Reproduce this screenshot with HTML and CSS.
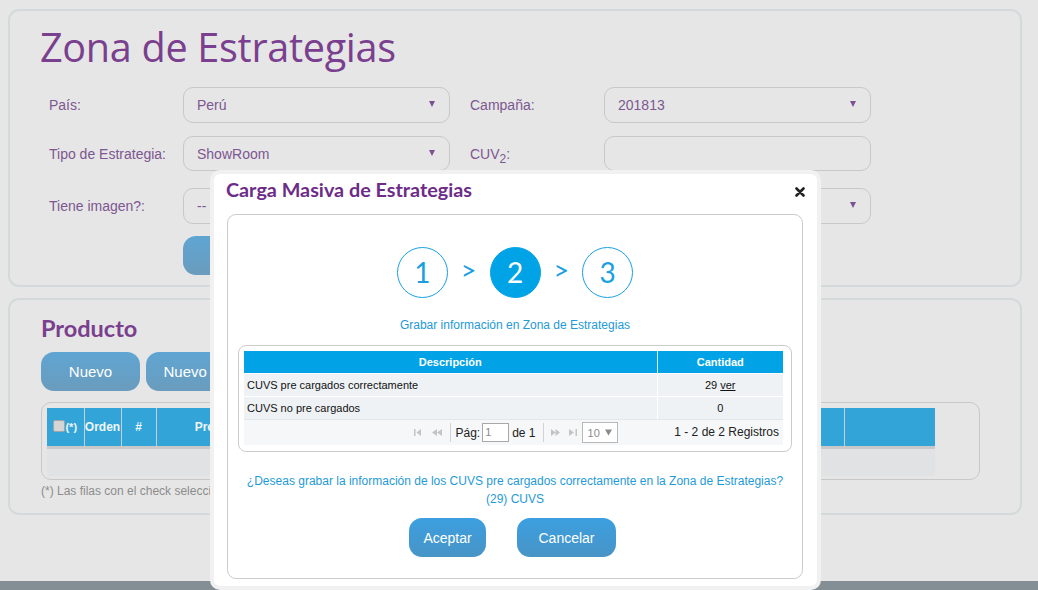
FILE: index.html
```html
<!DOCTYPE html>
<html lang="es">
<head>
<meta charset="utf-8">
<title>Zona de Estrategias</title>
<link rel="stylesheet" href="styles.css">
</head>
<body>
<div class="page">
  <section class="panel panel-filter">
    <h1 class="page-title">Zona de Estrategias</h1>
    <div class="form">
      <div class="form-row row-1">
        <label class="lbl">País:</label>
        <div class="select"><span>Perú</span><i class="arrow"></i></div>
        <label class="lbl lbl-2">Campaña:</label>
        <div class="select"><span>201813</span><i class="arrow"></i></div>
      </div>
      <div class="form-row row-2">
        <label class="lbl">Tipo de Estrategia:</label>
        <div class="select"><span>ShowRoom</span><i class="arrow"></i></div>
        <label class="lbl lbl-2">CUV<sub>2</sub>:</label>
        <div class="select input"></div>
      </div>
      <div class="form-row row-3">
        <label class="lbl">Tiene imagen?:</label>
        <div class="select"><span>--</span><i class="arrow"></i></div>
        <label class="lbl lbl-2">Activo:</label>
        <div class="select"><span>--</span><i class="arrow"></i></div>
      </div>
      <div class="form-actions">
        <button class="btn btn-muted btn-search">Buscar</button>
      </div>
    </div>
  </section>

  <section class="panel panel-product">
    <h2 class="section-title">Producto</h2>
    <div class="product-actions">
      <button class="btn btn-muted btn-nuevo">Nuevo</button>
      <button class="btn btn-muted btn-nuevo2">Nuevo Masivo</button>
    </div>
    <div class="grid-wrap">
      <table class="grid">
        <colgroup>
          <col style="width:37px"><col style="width:37px"><col style="width:35px"><col style="width:114px">
          <col style="width:190px"><col style="width:190px"><col style="width:194px"><col style="width:91px">
        </colgroup>
        <thead>
          <tr>
            <th><span class="chk"></span>(*)</th>
            <th>Orden</th>
            <th>#</th>
            <th>Precio</th>
            <th></th>
            <th></th>
            <th></th>
            <th></th>
          </tr>
        </thead>
        <tbody>
          <tr class="empty"><td colspan="8"></td></tr>
        </tbody>
      </table>
    </div>
    <p class="note">(*) Las filas con el check seleccionado indican que la estrategia se encuentra habilitada.</p>
  </section>
</div>
<div class="footer-strip"></div>

<div class="modal">
  <div class="modal-head">
    <h3 class="modal-title">Carga Masiva de Estrategias</h3>
    <span class="close" aria-label="Cerrar">
      <svg width="10" height="10" viewBox="0 0 10 10"><path d="M1.5 1.5 L8.5 8.5 M8.5 1.5 L1.5 8.5" stroke="#222" stroke-width="2.6" stroke-linecap="round"/></svg>
    </span>
  </div>
  <div class="modal-box">
    <div class="steps">
      <span class="step">1</span>
      <span class="step-sep">&gt;</span>
      <span class="step active">2</span>
      <span class="step-sep">&gt;</span>
      <span class="step">3</span>
    </div>
    <p class="step-caption">Grabar información en Zona de Estrategias</p>

    <div class="result-wrap">
      <table class="result">
        <colgroup><col style="width:413px"><col></colgroup>
        <thead>
          <tr><th>Descripción</th><th>Cantidad</th></tr>
        </thead>
        <tbody>
          <tr><td>CUVS pre cargados correctamente</td><td class="num">29 <a class="ver">ver</a></td></tr>
          <tr><td>CUVS no pre cargados</td><td class="num">0</td></tr>
        </tbody>
      </table>
      <div class="pager">
        <div class="pager-ctrl">
          <svg class="pi" width="7" height="7" viewBox="0 0 7 7"><rect x="0" y="0" width="1.5" height="7" fill="#c4c4c4"/><path d="M7 0 L2.5 3.5 L7 7 Z" fill="#c4c4c4"/></svg>
          <svg class="pi pi-2" width="10" height="7" viewBox="0 0 10 7"><path d="M5 0 L0 3.5 L5 7 Z M10 0 L5 3.5 L10 7 Z" fill="#c4c4c4"/></svg>
          <span class="psep psep-1"></span>
          <span class="ptxt">Pág:</span>
          <span class="pinput">1</span>
          <span class="ptxt">de 1</span>
          <span class="psep psep-2"></span>
          <svg class="pi" width="9" height="7" viewBox="0 0 9 7"><path d="M0 0 L4.5 3.5 L0 7 Z M4.5 0 L9 3.5 L4.5 7 Z" fill="#c4c4c4"/></svg>
          <svg class="pi pi-4" width="8" height="7" viewBox="0 0 8 7"><path d="M0 0 L5 3.5 L0 7 Z" fill="#c4c4c4"/><rect x="6.5" y="0" width="1.5" height="7" fill="#c4c4c4"/></svg>
          <span class="psel"><span>10</span><svg width="7" height="7" viewBox="0 0 7 7"><path d="M0 0.5 L7 0.5 L3.5 6.5 Z" fill="#8a8a8a"/></svg></span>
        </div>
        <div class="pager-info">1 - 2 de 2 Registros</div>
      </div>
    </div>

    <p class="confirm">¿Deseas grabar la información de los CUVS pre cargados correctamente en la Zona de Estrategias?</p>
    <p class="confirm confirm-2">(29) CUVS</p>
    <div class="modal-actions">
      <button class="btn btn-primary btn-ok">Aceptar</button>
      <button class="btn btn-primary btn-cancel">Cancelar</button>
    </div>
  </div>
</div>
</body>
</html>
```

FILE: styles.css
```css
* { box-sizing: border-box; }
html, body { margin: 0; padding: 0; }
body {
  width: 1038px;
  height: 590px;
  overflow: hidden;
  background: #e6e6e6;
  font-family: "Liberation Sans", Arial, sans-serif;
  position: relative;
}
.page {
  height: 581px;
  padding: 9px 16px 0 8px;
}
.panel {
  border: 2px solid #d4d9dc;
  border-radius: 11px;
  background: #e6e6e6;
}
.panel-filter {
  height: 278px;
  padding: 13px 30px 0 30px;
}
.page-title {
  margin: 0;
  font-family: "Open Sans", sans-serif;
  font-weight: 400;
  font-size: 39.6px;
  line-height: 47px;
  color: #7a3f8e;
  letter-spacing: -0.3px;
}
.form { padding-left: 9px; margin-top: 16px; }
.form-row {
  display: flex;
  align-items: center;
  height: 36px;
}
.row-2 { margin-top: 13px; height: 35px; }
.row-3 { margin-top: 17px; }
.lbl {
  width: 134px;
  font-size: 14px;
  color: #7d5791;
}
.lbl sub { font-size: 12px; vertical-align: -4px; line-height: 0; }
.lbl-2 { margin-left: 20px; }
.select {
  width: 267px;
  height: 100%;
  border: 1px solid #c8c8c8;
  border-radius: 10px;
  display: flex;
  align-items: center;
  justify-content: space-between;
  padding: 0 14px 0 13px;
  font-size: 14px;
  color: #7d5791;
}
.arrow {
  width: 0; height: 0;
  border-left: 3.5px solid transparent;
  border-right: 3.5px solid transparent;
  border-top: 6px solid #7d4f93;
  margin-top: -2px;
}
.form-actions { margin-top: 12px; padding-left: 134px; }
.btn {
  border: 0;
  font-family: "Liberation Sans", Arial, sans-serif;
  color: #fff;
  font-size: 15px;
  cursor: pointer;
}
.btn-muted {
  background: linear-gradient(#5fa5d3, #6a9cbd);
  border-radius: 13px;
  height: 39px;
}
.btn-search { width: 110px; }

.panel-product {
  margin-top: 11px;
  height: 217px;
  padding: 14px 31px 0 31px;
}
.section-title {
  margin: 0;
  font-family: Lato, sans-serif;
  font-weight: 700;
  font-size: 23.5px;
  line-height: 28px;
  color: #7a3f8e;
}
.product-actions { display: flex; gap: 6px; margin-top: 10px; }
.btn-nuevo { width: 99px; }
.btn-nuevo2 { width: 130px; }
.grid-wrap {
  margin-top: 11px;
  width: 939px;
  height: 78px;
  border: 1px solid #c8c8c8;
  border-radius: 10px;
  padding: 5px 0 0 5px;
}
.grid {
  border-collapse: collapse;
  table-layout: fixed;
  width: 888px;
}
.grid th {
  height: 39px;
  background: #33a4d7;
  color: #eef6fb;
  font-size: 12px;
  font-weight: 700;
  border-left: 1px solid #c8cfd3;
  padding: 0;
  text-align: center;
  white-space: nowrap;
}
.grid th:first-child { border-left: 0; font-size: 11px; }
.chk {
  display: inline-block;
  width: 12px; height: 12px;
  background: #d5d5d5;
  border: 1px solid #9ea4a8;
  border-radius: 2px;
  vertical-align: -1px;
}
.grid .empty td {
  height: 29px;
  background: #e0e2e3;
  border-top: 3px solid #c9c9c9;
}
.note {
  margin: 4px 0 0;
  font-size: 12px;
  color: #8c8c8c;
}
.footer-strip {
  height: 9px;
  background: #838e95;
}

/* Modal */
.modal {
  position: absolute;
  left: 210px;
  top: 170px;
  width: 611px;
  height: 420px;
  background: #fff;
  border: 4px solid #f1f1f1;
  border-radius: 10px;
  padding: 3px 14px 0 13px;
}
.modal-head {
  display: flex;
  align-items: center;
  justify-content: space-between;
}
.modal-title {
  margin: 0 0 0 -1px;
  font-family: Lato, sans-serif;
  font-weight: 700;
  font-size: 19.8px;
  line-height: 24px;
  color: #6c2c88;
}
.close { display: flex; margin-right: -2px; margin-top: 6px; }
.modal-box {
  margin-top: 13px;
  height: 365px;
  border: 1px solid #cccccc;
  border-radius: 9px;
  padding: 32px 10px 0 10px;
}
.steps {
  display: flex;
  justify-content: center;
  align-items: center;
  gap: 13px;
}
.step {
  width: 51px; height: 51px;
  border: 1px solid #17a0e3;
  border-radius: 50%;
  display: flex;
  align-items: center;
  justify-content: center;
  font-family: Lato, sans-serif;
  font-size: 28px;
  color: #199fe2;
  padding-bottom: 2px;
}
.step.active { background: #00a3e6; color: #fff; border-color: #00a3e6; }
.step-sep {
  font-family: Lato, sans-serif;
  font-size: 27px;
  line-height: 1;
  color: #199fe2;
  margin-top: -6px;
}
.step-caption {
  margin: 20px 0 0;
  text-align: center;
  font-size: 12px;
  line-height: 15px;
  color: #2399d8;
}
.result-wrap {
  margin-top: 12px;
  border: 1px solid #cccccc;
  border-radius: 8px;
  padding: 5px 8px 6px 5px;
}
.result {
  width: 100%;
  border-collapse: collapse;
  table-layout: fixed;
  font-size: 11px;
}
.result th {
  height: 22px;
  background: #01a3e6;
  color: #fff;
  font-weight: 700;
  padding: 0;
  text-align: center;
}
.result th + th { border-left: 1px solid #dcecf5; }
.result td {
  height: 23px;
  background: #eef2f5;
  color: #111;
  padding: 1px 3px 0;
  border-top: 1px solid #fff;
}
.result td + td { border-left: 1px solid #fff; }
.result td.num { text-align: center; }
.ver { text-decoration: underline; color: #111; }
.pager {
  position: relative;
  display: flex;
  justify-content: center;
  align-items: center;
  height: 26px;
  background: #f5f7f8;
  border-top: 1px solid #e3e7ea;
  font-size: 12px;
  color: #222;
  padding-left: 5px;
}
.pager-ctrl { display: flex; align-items: center; }
.pi { display: block; flex: none; }
.pi-2 { margin-left: 11px; }
.pi-4 { margin-left: 9px; }
.psep {
  width: 1px; height: 19px;
  background: #d3d3d3;
  flex: none;
}
.psep-1 { margin: 0 4px 0 8px; }
.psep-2 { margin: 0 7px 0 7px; }
.pinput {
  width: 27px; height: 19px;
  border: 1px solid #a8a8a8;
  background: #fff;
  margin: 0 3px 0 2px;
  font-size: 11px;
  color: #8a8a8a;
  padding: 2px 0 0 2px;
}
.psel {
  margin-left: 5px;
  width: 36px; height: 21px;
  border: 1px solid #b8b8b8;
  background: #fff;
  font-size: 11px;
  color: #8a8a8a;
  display: flex;
  align-items: center;
  gap: 5px;
  padding: 0 0 0 5px;
}
.pager-info {
  position: absolute;
  right: 4px;
  top: 5px;
}
.confirm {
  margin: 20px 0 0;
  text-align: center;
  font-size: 12px;
  line-height: 18px;
  color: #1f9ad7;
}
.confirm-2 { margin-top: 0; }
.modal-actions {
  display: flex;
  justify-content: center;
  gap: 31px;
  margin-top: 10px;
  padding-right: 5px;
}
.btn-primary {
  height: 39px;
  border-radius: 13px;
  background: linear-gradient(#3c9fe0, #4894c6);
  font-size: 14px;
}
.btn-ok { width: 77px; }
.btn-cancel { width: 99px; }
```
